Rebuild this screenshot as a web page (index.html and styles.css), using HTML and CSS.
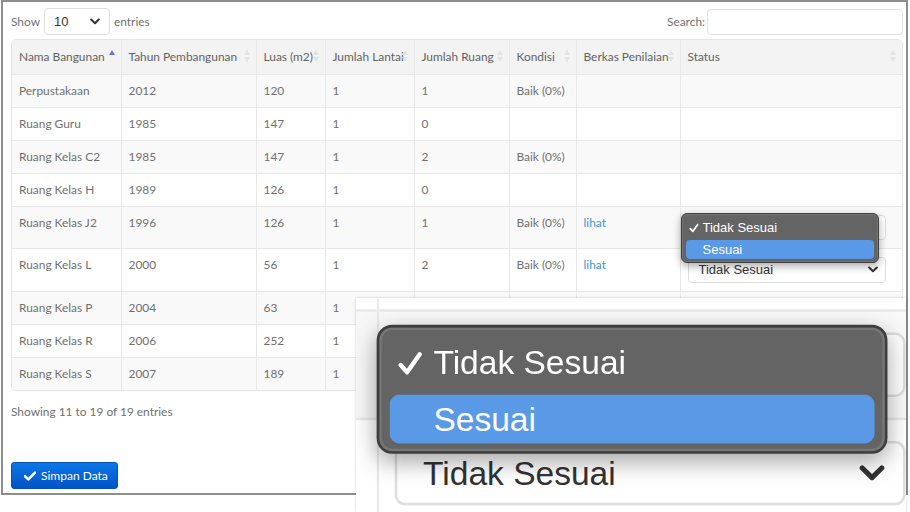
FILE: index.html
```html
<!DOCTYPE html>
<html>
<head>
<meta charset="utf-8">
<title>Data Bangunan</title>
<link rel="stylesheet" href="styles.css">
</head>
<body>
<div class="frame">
  <div class="toolbar">
    <div class="length">Show
      <div class="pick pick-sm"><span>10</span><svg class="chev" width="10" height="7" viewBox="0 0 10 7"><polyline points="1.2,1.5 5,5.2 8.8,1.5"/></svg></div>
      entries</div>
    <div class="search">Search:<div class="search-input"></div></div>
  </div>

  <div class="table-wrap">
    <table class="grid">
      <colgroup>
        <col class="c1"><col class="c2"><col class="c3"><col class="c4"><col class="c5"><col class="c6"><col class="c7"><col class="c8">
      </colgroup>
      <thead>
        <tr>
          <th class="sort asc">Nama Bangunan</th>
          <th class="sort">Tahun Pembangunan</th>
          <th class="sort">Luas (m2)</th>
          <th class="sort">Jumlah Lantai</th>
          <th class="sort">Jumlah Ruang</th>
          <th class="sort">Kondisi</th>
          <th class="sort">Berkas Penilaian</th>
          <th class="sort">Status</th>
        </tr>
      </thead>
      <tbody>
        <tr><td>Perpustakaan</td><td>2012</td><td>120</td><td>1</td><td>1</td><td>Baik (0%)</td><td></td><td></td></tr>
        <tr><td>Ruang Guru</td><td>1985</td><td>147</td><td>1</td><td>0</td><td></td><td></td><td></td></tr>
        <tr><td>Ruang Kelas C2</td><td>1985</td><td>147</td><td>1</td><td>2</td><td>Baik (0%)</td><td></td><td></td></tr>
        <tr><td>Ruang Kelas H</td><td>1989</td><td>126</td><td>1</td><td>0</td><td></td><td></td><td></td></tr>
        <tr><td>Ruang Kelas J2</td><td>1996</td><td>126</td><td>1</td><td>1</td><td>Baik (0%)</td><td><a class="link">lihat</a></td>
          <td class="status">
            <div class="pick pick-status"><span>Tidak Sesuai</span><svg class="chev" width="10" height="7" viewBox="0 0 10 7"><polyline points="1.2,1.5 5,5.2 8.8,1.5"/></svg></div>
            <div class="popup">
              <div class="opt checked"><svg class="tick" width="10" height="10" viewBox="0 0 10 10"><path d="M1.3 5.6 L3.8 8.4 L8.7 1.4"/></svg>Tidak Sesuai</div>
              <div class="opt hot">Sesuai</div>
            </div>
          </td></tr>
        <tr><td>Ruang Kelas L</td><td>2000</td><td>56</td><td>1</td><td>2</td><td>Baik (0%)</td><td><a class="link">lihat</a></td>
          <td class="status">
            <div class="pick pick-status tall"><span>Tidak Sesuai</span><svg class="chev" width="10" height="7" viewBox="0 0 10 7"><polyline points="1.2,1.5 5,5.2 8.8,1.5"/></svg></div>
          </td></tr>
        <tr><td>Ruang Kelas P</td><td>2004</td><td>63</td><td>1</td><td></td><td></td><td></td><td></td></tr>
        <tr><td>Ruang Kelas R</td><td>2006</td><td>252</td><td>1</td><td></td><td></td><td></td><td></td></tr>
        <tr><td>Ruang Kelas S</td><td>2007</td><td>189</td><td>1</td><td></td><td></td><td></td><td></td></tr>
      </tbody>
    </table>
  </div>

  <div class="info">Showing 11 to 19 of 19 entries</div>

  <button class="btn"><svg class="check" width="12" height="10" viewBox="0 0 12 10"><path d="M1 5.2 L4.3 8.4 L11 1.6" /></svg>Simpan Data</button>
</div>

<div class="inset">
  <div class="stage">
    <div class="stage-left">
      <div class="sl-top"></div>
      <div class="sl-j2"></div>
      <div class="sl-l"></div>
    </div>
    <div class="stage-col">
      <div class="sc-top"></div>
      <div class="sc-cell sc-j2">
        <div class="pick pick-status"><span>Tidak Sesuai</span><svg class="chev" width="10" height="7" viewBox="0 0 10 7"><polyline points="1.2,1.5 5,5.2 8.8,1.5"/></svg></div>
        <div class="popup">
          <div class="opt checked"><svg class="tick" width="10" height="10" viewBox="0 0 10 10"><path d="M1.3 5.6 L3.8 8.4 L8.7 1.4"/></svg>Tidak Sesuai</div>
          <div class="opt hot">Sesuai</div>
        </div>
      </div>
      <div class="sc-cell sc-l">
        <div class="pick pick-status"><span>Tidak Sesuai</span><svg class="chev" width="10" height="7" viewBox="0 0 10 7"><polyline points="1.2,1.5 5,5.2 8.8,1.5"/></svg></div>
      </div>
    </div>
  </div>
</div>
</body>
</html>
```

FILE: styles.css
```css
* { box-sizing: border-box; }
html, body { margin: 0; padding: 0; background: #fff; }
body {
  width: 910px; height: 512px; overflow: hidden; position: relative;
  font-family: Lato, "Open Sans", sans-serif; font-size: 11.9px; color: #707070;
}

.frame {
  margin-left: 1px;
  width: 907px; height: 495px;
  border: 2px solid #8e8e8e;
  padding: 6px 3px 0 8px;
}

.toolbar {
  display: flex; justify-content: space-between; align-items: center;
  height: 27px; margin-bottom: 4px;
}
.length { display: flex; align-items: center; gap: 4px; }
.search { display: flex; align-items: center; gap: 2px; }
.search-input {
  width: 196px; height: 26px; border: 1px solid #e0e0e0; border-radius: 4px; background: #fff;
}

.pick {
  display: flex; align-items: center; justify-content: space-between;
  background: #fff; border: 1px solid #dedede; border-radius: 4px;
  font-family: "Liberation Sans", Arial, sans-serif; font-size: 13px; color: #333;
}
.pick-sm { width: 66px; height: 27px; padding: 0 9px 0 9px; }
.pick-status { width: 198px; height: 25px; padding: 0 7px 0 10px; }
.pick-status.tall { height: 26px; }
.chev polyline { fill: none; stroke: #333; stroke-width: 2; stroke-linecap: round; stroke-linejoin: round; }

.table-wrap {
  border: 1px solid #e6e6e6; border-radius: 5px; overflow: hidden;
}
.grid { width: 100%; border-collapse: collapse; table-layout: fixed; }
.c1 { width: 109px; } .c2 { width: 135px; } .c3 { width: 69px; } .c4 { width: 89px; }
.c5 { width: 95px; } .c6 { width: 67px; } .c7 { width: 104px; } .c8 { width: 222px; }

.grid th, .grid td {
  text-align: left; vertical-align: top; white-space: nowrap; overflow: visible;
  padding: 8px 7px 8px 7px; line-height: 16px; font-weight: 400;
  border-left: 1px solid #e8e8e8;
}
.grid th:first-child, .grid td:first-child { border-left: 0; }
.grid th { background: #f3f3f3; color: #626262; height: 34px; padding-top: 9px; position: relative; padding-right: 12px; }
.grid td { border-top: 1px solid #e8e8e8; height: 33px; }
.grid tbody tr:nth-child(odd) td { background: #f9f9f9; }

.sort::before, .sort::after {
  content: ""; position: absolute; right: 6px;
  border-left: 3.5px solid transparent; border-right: 3.5px solid transparent;
}
.sort::before { top: 10px; border-bottom: 5px solid #e2e2e2; }
.sort::after { top: 17px; border-top: 5px solid #e2e2e2; }
.sort.asc::before { border-bottom-color: #6476dc; }
.sort.asc::after { border-top-color: #f3f3f3; }

.link { color: #3d93d3; text-decoration: none; }

.status { position: relative; }
.popup {
  position: absolute; left: 0; top: 6px; z-index: 3;
  width: 198px; height: 50px;
  background: #646464; border: 1px solid #3e3e3e; border-radius: 6px;
  box-shadow: 0 3px 9px rgba(0,0,0,0.35), inset 0 0 0 1px rgba(255,255,255,0.12);
  padding: 5px 4px;
  font-family: "Liberation Sans", Arial, sans-serif; font-size: 13px; color: #fff;
}
.opt { height: 19px; line-height: 19px; padding-left: 17px; position: relative; border-radius: 4px; }
.opt.checked { margin-bottom: 3px; margin-top: -1px; }
.opt .tick { position: absolute; left: 3px; top: 5px; }
.tick path { fill: none; stroke: #fff; stroke-width: 1.7; stroke-linecap: round; stroke-linejoin: round; }
.opt.hot { background: #5a99e6; }

.info { margin-top: 12px; line-height: 17px; }

.btn {
  margin-top: 42px;
  display: flex; align-items: center; gap: 5px;
  width: 107px; height: 27px; padding: 0 0 0 12px;
  border: 1px solid #0653b8; border-radius: 3px;
  background: linear-gradient(#0b78e8, #0152c6);
  color: #fff; font-family: Lato, "Open Sans", sans-serif; font-size: 12px;
}
.check path { fill: none; stroke: #fff; stroke-width: 2.6; stroke-linecap: round; stroke-linejoin: round; }

/* magnified inset */
.inset {
  position: absolute; left: 356px; top: 298px; width: 550px; height: 214px;
  overflow: hidden; background: #fff;
  box-shadow: 0 0 3px rgba(0,0,0,0.18);
}
.stage {
  width: 215px; height: 100px; margin-top: 1px;
  transform: scale(2.58); transform-origin: 0 0;
  display: flex;
}
.stage-left { width: 8.5px; flex-shrink: 0; border-right: 1px solid #e8e8e8; display: flex; flex-direction: column; }
.sl-top { height: 4.5px; flex-shrink: 0; background: #fff; border-bottom: 1px solid #e8e8e8; }
.sl-j2 { height: 42px; flex-shrink: 0; background: #f7f7f7; border-bottom: 1px solid #e8e8e8; }
.sl-l { flex: 1; background: #fff; }
.stage-col { flex: 1; display: flex; flex-direction: column; }
.sc-top { height: 4.5px; flex-shrink: 0; background: #fff; border-bottom: 1px solid #e8e8e8; }
.sc-cell { padding: 8px 0 8px 6.5px; position: relative; flex-shrink: 0; }
.sc-j2 { height: 42px; background: #f9f9f9; border-bottom: 1px solid #e8e8e8; }
.sc-l { flex: 1; background: #fff; }
.sc-j2 .popup { left: -0.5px; top: 5px; }
```
